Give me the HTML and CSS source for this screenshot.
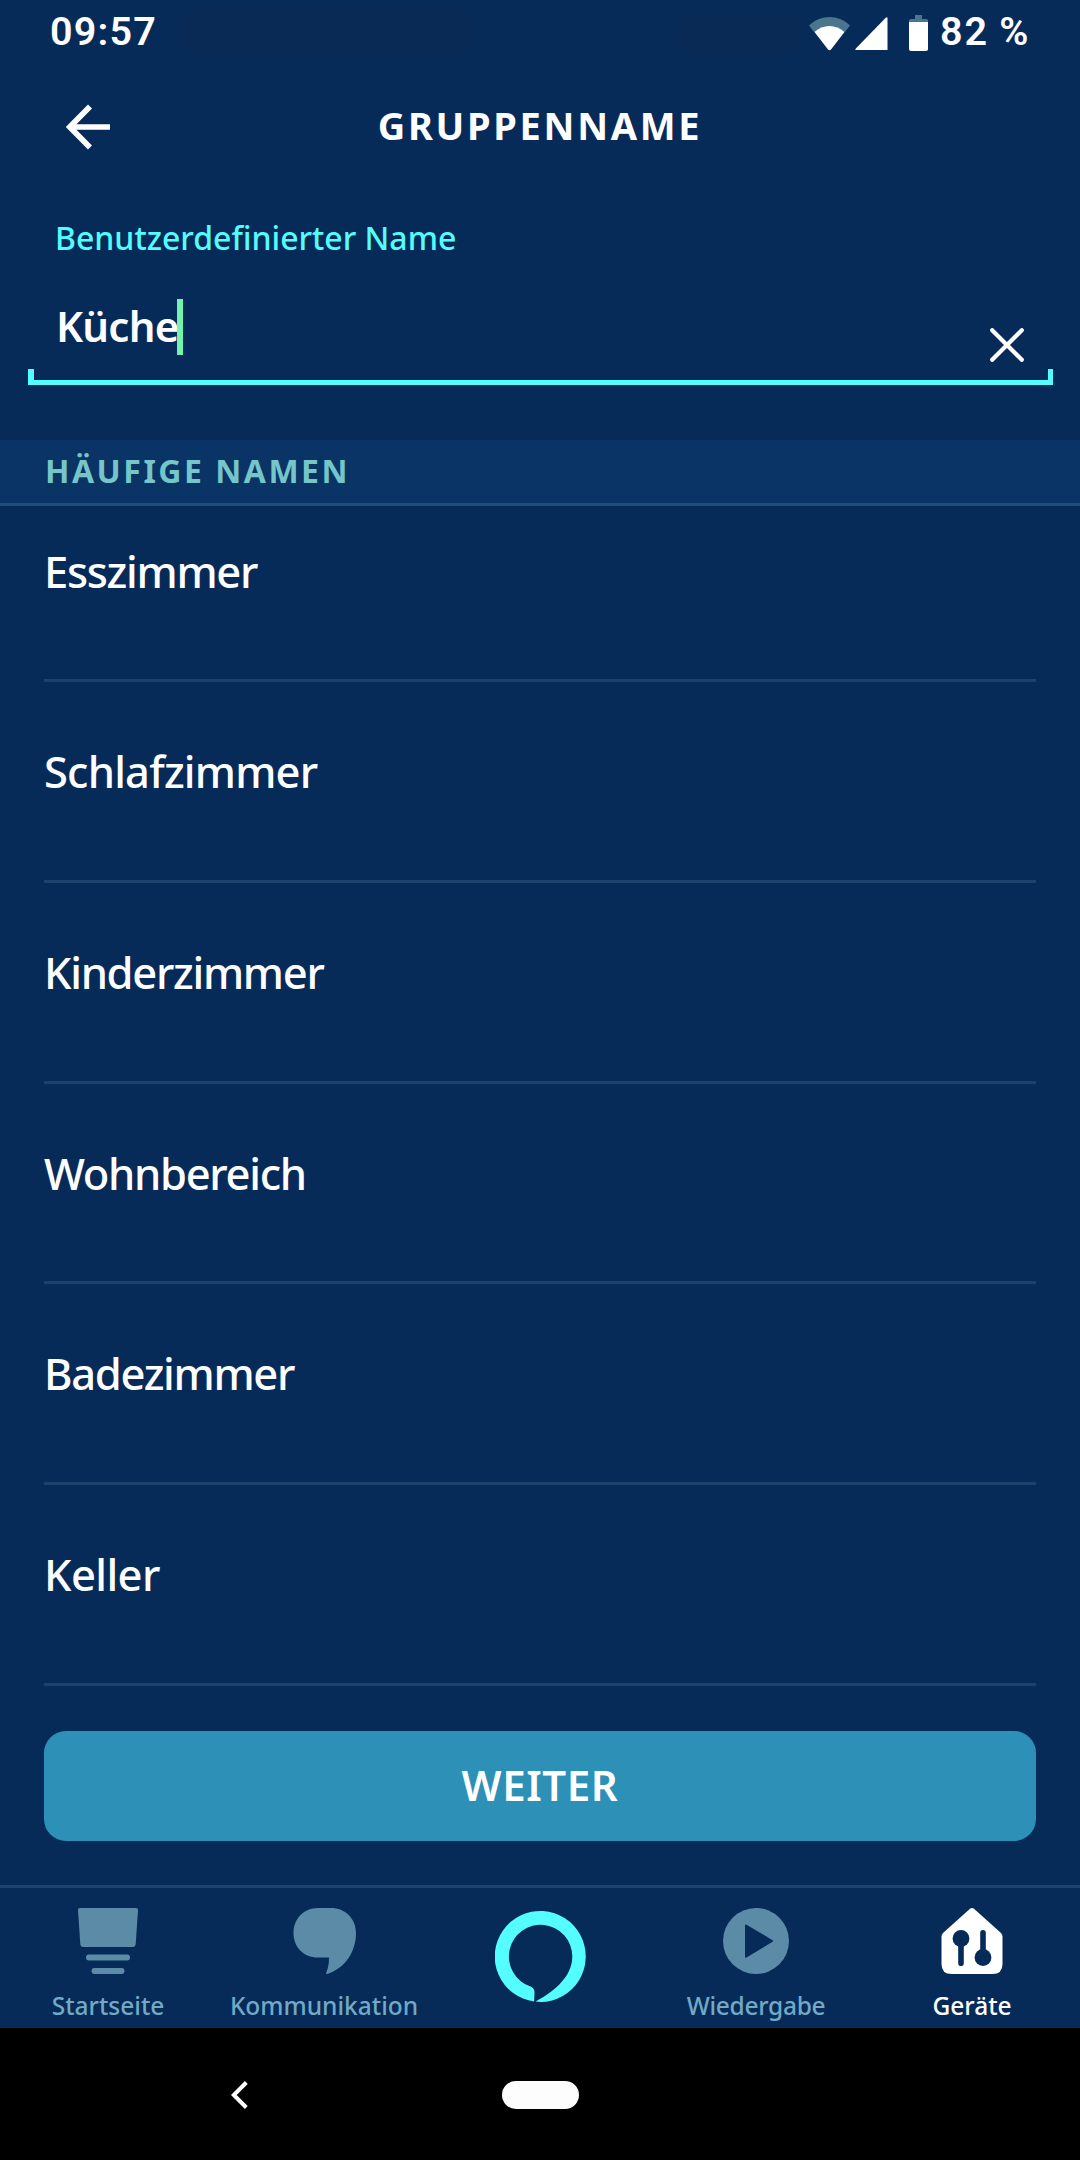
FILE: index.html
```html
<!DOCTYPE html>
<html lang="de">
<head>
    <meta charset="UTF-8">
    <meta name="viewport" content="width=device-width, initial-scale=1.0">
    <title>Gruppenname</title>
    <link rel="stylesheet" href="styles.css">
</head>
<body>
    <div class="status-bar">
        <span class="time">09:57</span>
        <span class="shade shade-left"></span>
        <span class="shade shade-right"></span>
        <svg class="wifi" width="41" height="34" viewBox="0 0 41 34">
            <path d="M0 8.500C12-2.800 29-2.800 41 8.500L36 15H5z" fill="#4a768d"/>
            <path d="M5.500 15C14 7 27 7 35.500 15L22 32.400Q20.500 34 19 32.400z" fill="#fff"/>
        </svg>
        <svg class="signal" width="33" height="34" viewBox="0 0 33 34">
            <path d="M32.500 1.500V33H1.500Q-.3 33 .8 31.500L30.500 1Q32.500-.6 32.500 1.500z" fill="#fff"/>
        </svg>
        <svg class="battery" width="19" height="36" viewBox="0 0 19 36">
            <path d="M6 0h7v4h4.500Q19 4 19 5.500V8H0V5.500Q0 4 1.500 4H6z" fill="#4a768d"/>
            <path d="M0 7h19v27q0 2-2 2H2q-2 0-2-2z" fill="#fff"/>
        </svg>
        <span class="percent"><span class="num">82</span><span>%</span></span>
    </div>

    <div class="header">
        <svg class="back" width="46" height="46" viewBox="0 0 46 46" fill="none" stroke="#fff" stroke-width="5.600">
            <path d="M24 2.500L3.800 23L24 43.500M4 23h40"/>
        </svg>
        <h1>GRUPPENNAME</h1>
    </div>

    <div class="field">
        <label class="field-label">Benutzerdefinierter Name</label>
        <div class="field-row">
            <span class="field-value">Küche</span>
            <span class="caret"></span>
            <svg class="clear" width="34" height="34" viewBox="0 0 34 34" stroke="#fff" stroke-width="4.200" stroke-linecap="round">
                <path d="M2.200 2.200L31.800 31.800M31.800 2.200L2.200 31.800"/>
            </svg>
        </div>
        <div class="field-line"></div>
    </div>

    <h2 class="section">HÄUFIGE NAMEN</h2>
    <ul class="names">
        <li class="n1">Esszimmer</li>
        <li class="n2">Schlafzimmer</li>
        <li class="n3">Kinderzimmer</li>
        <li class="n4">Wohnbereich</li>
        <li class="n5">Badezimmer</li>
        <li class="n6">Keller</li>
    </ul>

    <button class="next">WEITER</button>

    <div class="tabs">
        <div class="tab">
            <svg width="66" height="66" viewBox="0 0 66 66" fill="#5b8ba7">
                <path d="M5 0h56q2.200 0 2 2.200L60.700 36q-.2 3-3 3H8.300q-2.800 0-3-3L3 2.200Q2.800 0 5 0z"/>
                <rect x="11" y="46.500" width="44" height="6" rx="3"/>
                <rect x="16.500" y="60" width="33" height="6" rx="3"/>
            </svg>
            <span>Startseite</span>
        </div>
        <div class="tab">
            <svg width="66" height="66" viewBox="0 0 66 66" fill="#5b8ba7">
                <path d="M27 0h13C54 0 65 10.500 65 25C65 44 54 60 36.500 66Q34.500 66.300 35.500 64Q38 58 38 49.500H27C12.500 49.500 2.500 39 2.500 25S12.500 0 27 0z"/>
            </svg>
            <span>Kommunikation</span>
        </div>
        <div class="tab tab-alexa">
            <svg width="91" height="91" viewBox="0 0 91 91" fill="#53fefd">
                <path d="M39.200 90.600A45.500 45.500 0 1 1 45.500 91Q43 91 40.500 90.600C57 81.500 77.300 67 77.300 45.500A31.700 31.700 0 1 0 35.500 75.500Q39.500 77 39.500 81z"/>
            </svg>
        </div>
        <div class="tab tab-play">
            <svg width="66" height="66" viewBox="0 0 66 66">
                <circle cx="33" cy="33" r="33" fill="#5b8ba7"/>
                <path d="M23 17.500L49 33L23 48.700z" fill="#072b59" stroke="#072b59" stroke-width="2" stroke-linejoin="round"/>
            </svg>
            <span>Wiedergabe</span>
        </div>
        <div class="tab active">
            <svg width="66" height="66" viewBox="0 0 66 66">
                <path d="M31 .8Q33-.8 35 .8L62 25Q63.500 26.500 63.500 28.500V56Q63.500 66 53.500 66H12.500Q2.500 66 2.500 56V28.500Q2.500 26.500 4 25z" fill="#fff"/>
                <circle cx="22" cy="30.500" r="8.400" fill="#072b59"/>
                <circle cx="44" cy="49.500" r="8.400" fill="#072b59"/>
                <path d="M22 32V55.200M44 48V24.800" stroke="#072b59" stroke-width="5.600" stroke-linecap="round"/>
            </svg>
            <span>Geräte</span>
        </div>
    </div>

    <div class="nav-bar">
        <svg class="nav-back" width="17" height="28" viewBox="0 0 17 28" fill="none" stroke="#fff" stroke-width="4">
            <path d="M15.300 1.500L2.800 14L15.300 26.500"/>
        </svg>
        <span class="nav-home"></span>
    </div>
</body>
</html>
```
FILE: styles.css
```css
* {
    box-sizing: border-box;
}

body {
    margin: 0;
    width: 1080px;
    height: 2160px;
    display: flex;
    flex-direction: column;
    background: #072b59;
    color: #fff;
    font-family: "Noto Sans", "Open Sans", sans-serif;
    overflow: hidden;
}

svg {
    display: block;
    flex: none;
}

h1, h2, ul {
    margin: 0;
    padding: 0;
    font-weight: normal;
}

/* status bar */
.status-bar {
    height: 62px;
    display: flex;
    align-items: flex-start;
    padding-left: 50px;
    font: 600 39.5px/46px Roboto, sans-serif;
    white-space: nowrap;
}

.time {
    width: 127px;
    margin-top: 9px;
    letter-spacing: 1.2px;
}

.shade {
    background: #082a55;
}

.shade-left {
    width: 297px;
    height: 52px;
    margin-top: 5px;
    border-radius: 26px;
}

.shade-right {
    width: 127px;
    height: 42px;
    margin: 14px 7px 0 201px;
    border-radius: 21px;
}

.wifi, .signal {
    margin-top: 17px;
}

.signal {
    margin-left: 5px;
}

.battery {
    margin: 15px 0 0 21px;
}

.percent {
    display: flex;
    gap: 10px;
    margin: 9px 0 0 12px;
}

.num {
    letter-spacing: 2px;
}

/* header */
.header {
    height: 130px;
    display: grid;
    grid-template-columns: 66px 46px 856px;
    align-items: center;
}

.back {
    grid-column: 2;
}

.header h1 {
    grid-column: 3;
    padding-bottom: 4px;
    text-align: center;
    font-size: 38px;
    font-weight: 700;
    line-height: 50px;
    letter-spacing: 2.7px;
}

/* text field */
.field {
    height: 248px;
    padding: 20px 27px 0 28px;
}

.field-label {
    display: block;
    height: 50px;
    padding-left: 27px;
    color: #53fdfd;
    font-size: 32px;
    font-weight: 500;
    line-height: 51px;
}

.field-row {
    height: 107px;
    display: flex;
    padding-left: 28px;
}

.field-value {
    width: 121px;
    margin-top: 36px;
    font-size: 42px;
    font-weight: 600;
    line-height: 56px;
    letter-spacing: -0.8px;
}

.caret {
    width: 6px;
    height: 56px;
    margin-top: 37px;
    background: #74f3b0;
}

.clear {
    margin: 66px 29px 0 auto;
}

/* underline with short ticks on both ends */
.field-line {
    height: 16px;
    border: solid #53fdfd;
    border-width: 0 5px 5px 6px;
}

/* list */
.section {
    height: 66px;
    padding-left: 45px;
    background: #0b3466;
    border-bottom: 3px solid #1f4e77;
    color: #74c6c8;
    font-size: 32px;
    font-weight: 700;
    line-height: 61px;
    letter-spacing: 2.5px;
}

.names {
    height: 1180px;
    padding: 0 44px;
    list-style: none;
}

.names li {
    height: 200.8px;
    padding-top: 59px;
    border-bottom: 3px solid #1b426a;
    font-size: 43.5px;
    font-weight: 500;
    line-height: 60px;
    letter-spacing: -1.3px;
}

.names .n1 {
    height: 176px;
    padding-top: 35px;
}

.names .n2 {
    letter-spacing: -0.8px;
}

.names .n6 {
    letter-spacing: -0.6px;
}

.next {
    flex: none;
    width: 992px;
    height: 110px;
    margin: 45px 44px 44px;
    padding: 0 0 2px;
    border: 0;
    border-radius: 22px;
    background: #2d90b7;
    color: #fff;
    font: 600 42px/108px "Noto Sans", sans-serif;
    letter-spacing: 0.6px;
}

/* bottom tabs */
.tabs {
    height: 143px;
    display: grid;
    grid-template-columns: repeat(5, 216px);
    border-top: 3px solid #1b426a;
}

.tab {
    display: flex;
    flex-direction: column;
    align-items: center;
    padding-top: 20px;
    color: #72a9c4;
    font-size: 24.5px;
    font-weight: 500;
    line-height: 30px;
}

.tab span {
    margin-top: 17px;
}

.tab-alexa {
    padding-top: 23px;
}

.tab-play span {
    letter-spacing: -0.3px;
}

.active {
    color: #fff;
}

/* system navigation */
.nav-bar {
    height: 132px;
    display: flex;
    align-items: center;
    padding: 1px 0 0 231px;
    background: #000;
}

.nav-home {
    width: 77px;
    height: 28px;
    margin-left: 254px;
    border-radius: 14px;
    background: #fdfdfd;
}
```
